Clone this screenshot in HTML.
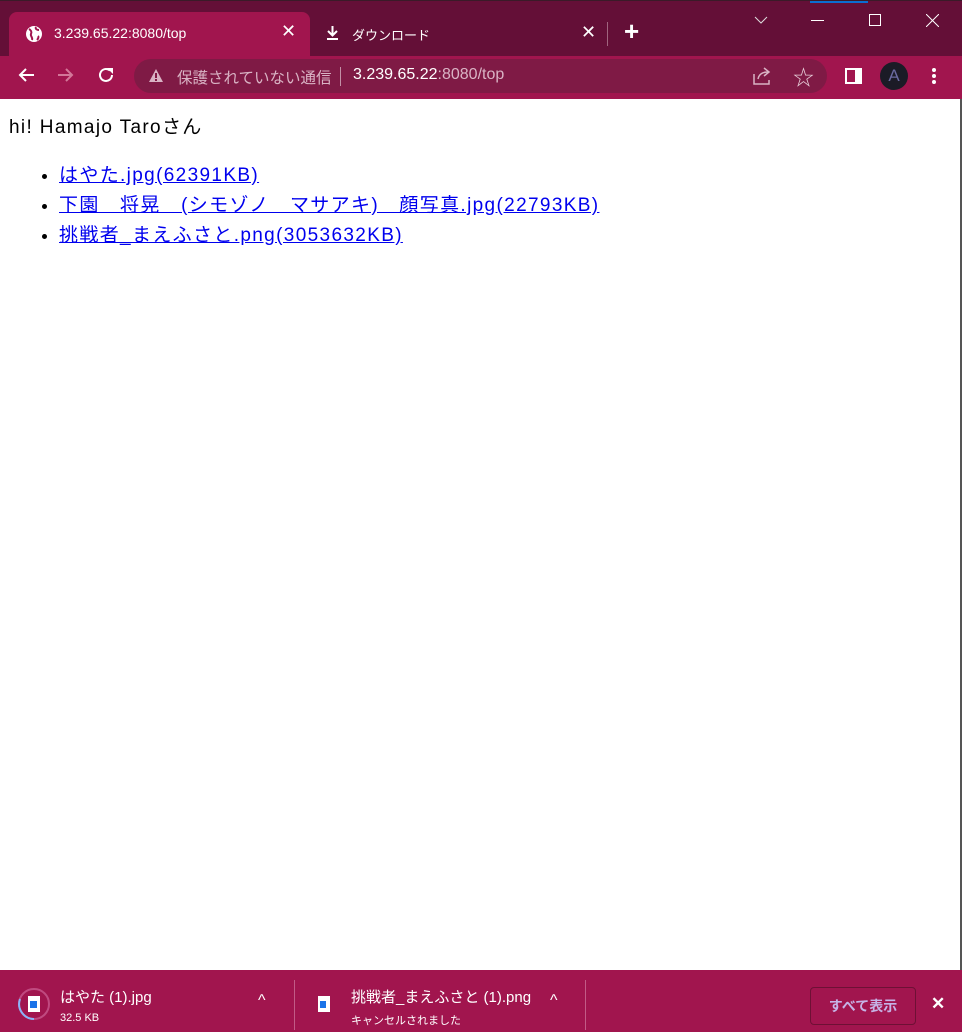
<!DOCTYPE html>
<html><head><meta charset="utf-8"><style>
*{margin:0;padding:0;box-sizing:border-box}
body{width:962px;height:1032px;overflow:hidden;background:#fff;font-family:"Liberation Sans","Noto Sans CJK JP",sans-serif;position:relative}
.top{position:absolute;left:0;top:0;width:962px;height:56px;background:#640f37;border-top:1px solid #3a1a28}
.tab{position:absolute;left:9px;top:11px;width:301px;height:45px;background:#a1154e;border-radius:8px 8px 0 0;color:#fff;font-size:14px}
.tb{position:absolute;left:0;top:56px;width:962px;height:43px;background:#a1154e}
.omni{position:absolute;left:134px;top:59px;width:693px;height:34px;background:#7f1a45;border-radius:17px;color:#d9b3c4;font-size:16px;white-space:nowrap}
.w{color:#fff;position:absolute;font-size:14px}
.content{position:absolute;left:0;top:99px;width:960px;height:871px;background:#fff;font-size:19px;color:#000;letter-spacing:1.35px;white-space:nowrap}
.dl{position:absolute;left:0;top:970px;width:962px;height:62px;background:#a1154e;color:#fff;white-space:nowrap}
a{color:#0000ee;text-decoration:underline}
ul{position:absolute;left:59px;top:62px;list-style:disc;line-height:30px}
</style></head><body>
<div class="top">
 <div class="tab">
  <svg style="position:absolute;left:16px;top:13px" width="18" height="18" viewBox="0 0 18 18"><circle cx="9" cy="9" r="8" fill="#fff"/><path d="M4 4c2 1 3 3 2 5s2 3 1 6M11 2c-1 2 1 3 3 3M13 11c1 1 0 3-1 4" stroke="#a1154e" stroke-width="2" fill="none"/></svg>
  <span style="position:absolute;left:45px;top:13px">3.239.65.22:8080/top</span>
  <span style="position:absolute;left:272px;top:9px;font-size:18px">✕</span>
 </div>
 <svg style="position:absolute;left:325px;top:24px" width="15" height="16" viewBox="0 0 15 16"><path d="M7.5 1v9M3 6l4.5 4.5L12 6M2 14h11" stroke="#fff" stroke-width="2" fill="none"/></svg>
 <span class="w" style="left:352px;top:24px;font-size:13px">ダウンロード</span>
 <span class="w" style="left:581px;top:21px;font-size:18px">✕</span>
 <div style="position:absolute;left:607px;top:21px;width:1px;height:24px;background:#a0657f"></div>
 <span class="w" style="left:624px;top:15px;font-size:26px;font-weight:bold">+</span>
 <svg style="position:absolute;left:754px;top:15px" width="14" height="8"><path d="M1 1l6 6 6-6" stroke="#ddd" fill="none"/></svg>
 <div style="position:absolute;left:811px;top:19px;width:13px;height:1px;background:#fff"></div>
 <div style="position:absolute;left:869px;top:13px;width:12px;height:12px;border:1px solid #fff"></div>
 <svg style="position:absolute;left:926px;top:13px" width="13" height="13"><path d="M0 0l13 13M13 0L0 13" stroke="#fff"/></svg>
 <div style="position:absolute;left:810px;top:0;width:58px;height:2px;background:#0a6ed1"></div>
</div>
<div class="tb">
 <svg style="position:absolute;left:17px;top:11px" width="18" height="16"><path d="M17 8H3M9 2L3 8l6 6" stroke="#fff" stroke-width="2" fill="none"/></svg>
 <svg style="position:absolute;left:57px;top:11px" width="18" height="16"><path d="M1 8h14M9 2l6 6-6 6" stroke="#d37799" stroke-width="2" fill="none"/></svg>
 <svg style="position:absolute;left:97px;top:10px" width="18" height="18" viewBox="0 0 18 18"><path d="M15 9a6 6 0 1 1-2-4.5" stroke="#fff" stroke-width="2" fill="none"/><path d="M10 2h6v6z" fill="#fff"/></svg>
</div>
<div class="omni">
 <svg style="position:absolute;left:15px;top:10px" width="14" height="13"><path d="M7 0L14 13H0z" fill="#d9b3c4"/><path d="M7 4v5M7 10v2" stroke="#7f1a45" stroke-width="2"/></svg>
 <span style="position:absolute;left:43px;top:7px;font-size:15.5px">保護されていない通信</span>
 <div style="position:absolute;left:206px;top:8px;width:1px;height:19px;background:#c290a6"></div>
 <span style="position:absolute;left:219px;top:7px"><span style="color:#fff">3.239.65.22</span>:8080/top</span>
 <svg style="position:absolute;left:619px;top:8px" width="20" height="18"><path d="M1 7v10h15v-4M5 12c1-5 5-7 10-7M11 1l5 4-5 4" stroke="#d9b3c4" stroke-width="1.5" fill="none"/></svg>
 <span style="position:absolute;left:659px;top:3px;font-size:21px;color:#e8d0da">☆</span>
</div>
<div style="position:absolute;left:845px;top:68px;width:17px;height:16px;border:2px solid #fff;border-right:7px solid #fff"></div>
<div style="position:absolute;left:880px;top:62px;width:28px;height:28px;border-radius:50%;background:#1b1b26;color:#6a6aa0;font-size:17px;text-align:center;line-height:28px">A</div>
<div style="position:absolute;left:932px;top:68px;width:4px;height:4px;background:#fff;border-radius:2px;box-shadow:0 6px #fff,0 12px #fff"></div>
<div class="content">
 <div style="position:absolute;left:9px;top:13px">hi! Hamajo Taroさん</div>
 <ul>
  <li><a>はやた.jpg(62391KB)</a></li>
  <li><a>下園　将晃　(シモゾノ　マサアキ)　顔写真.jpg(22793KB)</a></li>
  <li><a>挑戦者_まえふさと.png(3053632KB)</a></li>
 </ul>
</div>
<div style="position:absolute;left:960px;top:99px;width:2px;height:871px;background:#555"></div>
<div class="dl">
 <svg style="position:absolute;left:17px;top:17px" width="34" height="34"><circle cx="17" cy="17" r="15" stroke="#c04a80" stroke-width="2" fill="none"/><path d="M17 32A15 15 0 0 1 3 12" stroke="#8ab4f8" stroke-width="2" fill="none"/><rect x="11" y="9" width="12" height="16" fill="#fff"/><rect x="13" y="14" width="7" height="7" fill="#1a73e8"/></svg>
 <span style="position:absolute;left:60px;top:16px;font-size:15px">はやた (1).jpg</span>
 <span style="position:absolute;left:60px;top:42px;font-size:11px">32.5 KB</span>
 <span style="position:absolute;left:258px;top:22px;font-size:16px">^</span>
 <div style="position:absolute;left:294px;top:10px;width:1px;height:50px;background:#c25b86"></div>
 <svg style="position:absolute;left:316px;top:25px" width="18" height="20"><rect x="2" y="1" width="12" height="16" fill="#fff"/><rect x="4" y="6" width="6" height="7" fill="#1a73e8"/></svg>
 <span style="position:absolute;left:351px;top:16px;font-size:15px">挑戦者_まえふさと (1).png</span>
 <span style="position:absolute;left:351px;top:42px;font-size:11px">キャンセルされました</span>
 <span style="position:absolute;left:550px;top:22px;font-size:16px">^</span>
 <div style="position:absolute;left:585px;top:10px;width:1px;height:50px;background:#c25b86"></div>
 <div style="position:absolute;left:810px;top:17px;width:106px;height:38px;border:1px solid #6e1035;border-radius:4px;color:#c6b3e6;font-size:14px;font-weight:bold;text-align:center;line-height:36px">すべて表示</div>
 <span style="position:absolute;left:931px;top:24px;font-size:17px;font-weight:bold">✕</span>
</div>
</body></html>
